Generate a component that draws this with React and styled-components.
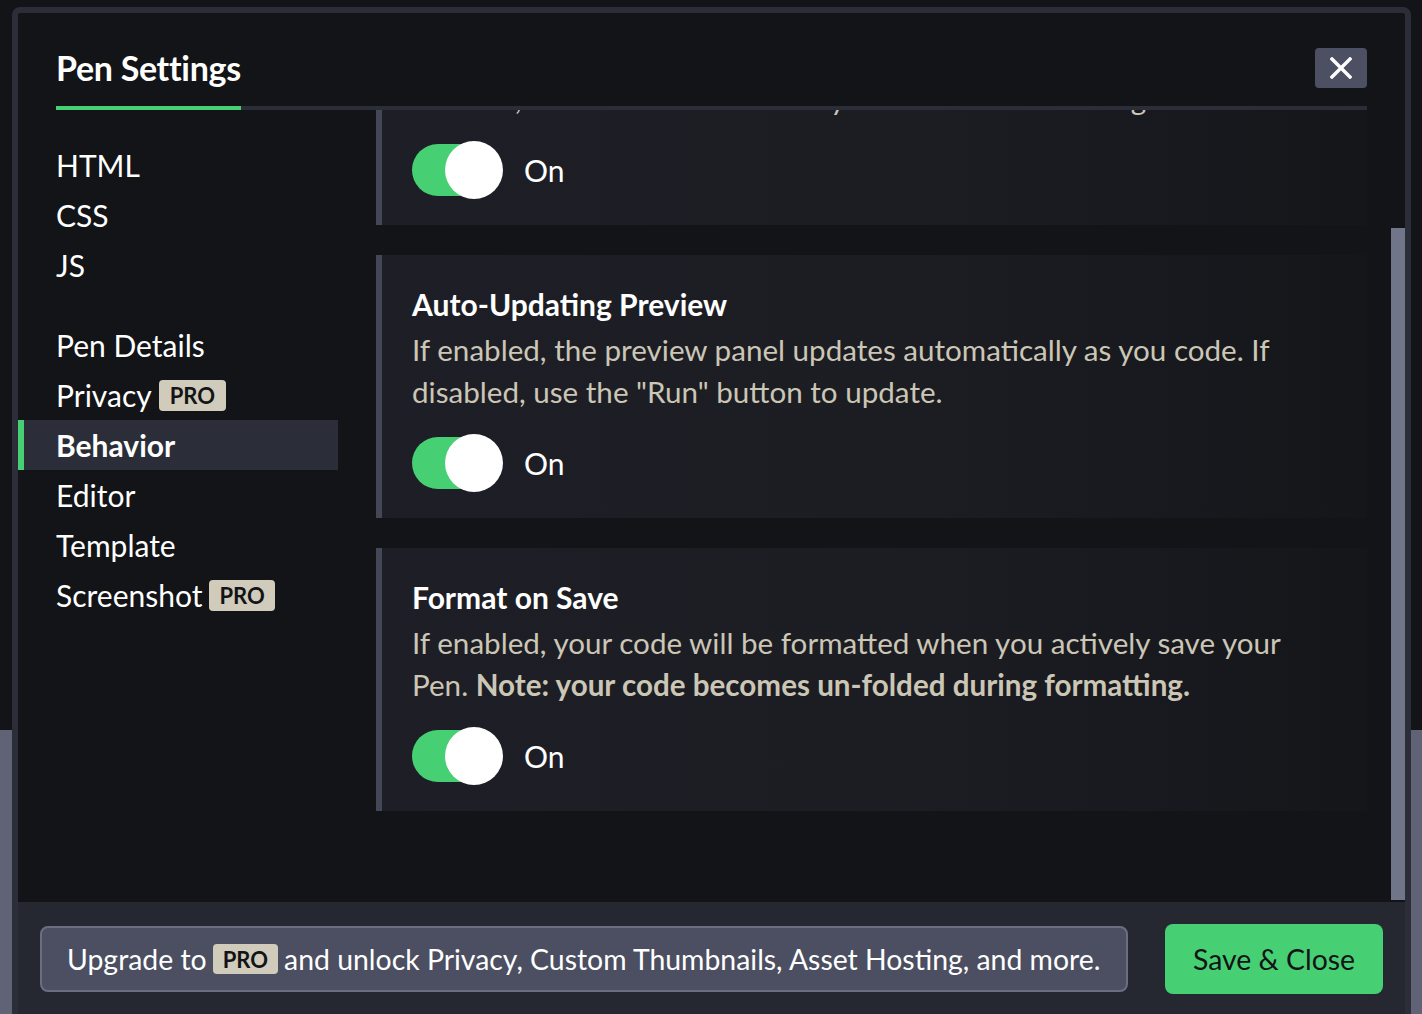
import React from "react";
import styled, { createGlobalStyle } from "styled-components";

const GlobalStyle = createGlobalStyle`
  html, body {
    margin: 0;
    height: 100%;
    overflow: hidden;
  }
  body {
    background: linear-gradient(to bottom, #131417 0, #131417 730px, #5f6375 730px, #5f6375 100%);
    font-family: Lato, "Open Sans", "Liberation Sans", sans-serif;
    color: #fff;
  }
  * { box-sizing: border-box; }
`;

const Stage = styled.div`
  height: 1014px;
  padding: 7px 11px 0 12px;
  overflow: hidden;
`;

const Modal = styled.div`
  height: 1040px;
  display: flex;
  flex-direction: column;
  background: #131417;
  border: 6px solid #2b2e38;
  border-radius: 8px;
  overflow: hidden;
`;

const Header = styled.div`
  flex: none;
  padding: 0 38px;
`;

const HeaderInner = styled.div`
  display: flex;
  justify-content: space-between;
  align-items: flex-start;
  padding-top: 35px;
  border-bottom: 4px solid #2b2e38;
`;

const Title = styled.h1`
  margin: 0 0 -4px;
  font-size: 34px;
  line-height: 40px;
  font-weight: 700;
  letter-spacing: -0.3px;
  padding-bottom: 18px;
  border-bottom: 4px solid #47cf73;
  color: #fff;
`;

const CloseButton = styled.button`
  width: 52px;
  height: 40px;
  border: none;
  border-radius: 4px;
  background: #4c5062;
  display: flex;
  align-items: center;
  justify-content: center;
  padding: 0;
  cursor: pointer;
`;

const Body = styled.div`
  flex: none;
  height: 792px;
  display: flex;
`;

const Sidebar = styled.nav`
  flex: none;
  width: 320px;
  padding-top: 30px;
  display: flex;
  flex-direction: column;
  gap: 30px;
`;

const NavGroup = styled.div`
  display: flex;
  flex-direction: column;
`;

const NavItem = styled.div`
  height: 50px;
  display: flex;
  align-items: center;
  font-size: 30px;
  color: #fff;
  font-weight: ${(p) => (p.$active ? 700 : 400)};
  padding-left: ${(p) => (p.$active ? "32px" : "38px")};
  border-left: ${(p) => (p.$active ? "6px solid #47cf73" : "none")};
  background: ${(p) => (p.$active ? "#2b2e38" : "transparent")};
`;

const Badge = styled.span`
  display: inline-flex;
  align-items: center;
  justify-content: center;
  height: ${(p) => p.$h || 31}px;
  padding: 0 ${(p) => p.$px || 11}px;
  margin: 0 ${(p) => p.$mx || 7}px;
  background: #d0cbba;
  color: #131417;
  font-size: 22px;
  font-weight: 700;
  border-radius: 4px;
`;

const Content = styled.div`
  flex: 1;
  margin-left: 38px;
  margin-right: 24px;
  overflow: hidden;
`;

const Scroller = styled.div`
  margin-top: -106px;
  display: flex;
  flex-direction: column;
  gap: 30px;
`;

const Panel = styled.section`
  border-left: 6px solid #434756;
  background: linear-gradient(to right, #1e1f26 0%, #1c1d23 55%, #15161a 100%);
  padding: 30px 30px 26px;
`;

const PanelTitle = styled.h3`
  margin: 0;
  font-size: 30px;
  line-height: 38px;
  font-weight: 700;
  color: #fff;
`;

const PanelText = styled.p`
  margin: 6px 0 0;
  max-width: 920px;
  font-size: 29.6px;
  line-height: 42px;
  color: #cbc6b5;
  strong {
    font-weight: 700;
  }
`;

const SwitchRow = styled.div`
  margin-top: 21px;
  display: flex;
  align-items: center;
  gap: 21px;
  font-size: 30px;
  color: #fff;
`;

const Switch = styled.div`
  position: relative;
  width: 91px;
  height: 58px;
  &::before {
    content: "";
    position: absolute;
    left: 0;
    top: 3px;
    width: 84px;
    height: 52px;
    border-radius: 26px;
    background: #47cf73;
  }
  &::after {
    content: "";
    position: absolute;
    right: 0;
    top: 0;
    width: 58px;
    height: 58px;
    border-radius: 50%;
    background: #fff;
  }
`;

const ScrollTrack = styled.div`
  flex: none;
  width: 14px;
`;

const ScrollThumb = styled.div`
  margin-top: 118px;
  height: 672px;
  background: #70758a;
`;

const Footer = styled.div`
  flex: 1;
  background: #252831;
  padding: 22px;
  display: flex;
  justify-content: space-between;
  align-items: flex-start;
`;

const Upgrade = styled.div`
  margin-top: 2px;
  height: 66px;
  display: flex;
  align-items: center;
  padding: 0 26px 0 25px;
  background: #4b4f61;
  border: 2px solid #6a6e80;
  border-radius: 8px;
  font-size: 28.4px;
  color: #fff;
  white-space: nowrap;
`;

const SaveButton = styled.button`
  flex: none;
  height: 70px;
  width: 218px;
  padding: 0;
  border: none;
  border-radius: 8px;
  background: #47cf73;
  color: #131417;
  font-family: Lato, "Open Sans", sans-serif;
  font-size: 28.4px;
  white-space: nowrap;
  cursor: pointer;
`;

const XIcon = () => (
  <svg width="22" height="22" viewBox="0 0 22 22" aria-hidden="true">
    <path d="M2 2 L20 20 M20 2 L2 20" stroke="#fff" strokeWidth="3.4" strokeLinecap="square" fill="none" />
  </svg>
);

const Toggle = () => (
  <SwitchRow>
    <Switch />
    <span>On</span>
  </SwitchRow>
);

export default function App() {
  return (
    <>
      <GlobalStyle />
      <Stage>
        <Modal>
          <Header>
            <HeaderInner>
              <Title>Pen Settings</Title>
              <CloseButton aria-label="Close">
                <XIcon />
              </CloseButton>
            </HeaderInner>
          </Header>
          <Body>
            <Sidebar>
              <NavGroup>
                <NavItem>HTML</NavItem>
                <NavItem>CSS</NavItem>
                <NavItem>JS</NavItem>
              </NavGroup>
              <NavGroup>
                <NavItem>Pen Details</NavItem>
                <NavItem>
                  Privacy<Badge>PRO</Badge>
                </NavItem>
                <NavItem $active>Behavior</NavItem>
                <NavItem>Editor</NavItem>
                <NavItem>Template</NavItem>
                <NavItem>
                  Screenshot<Badge $px={10}>PRO</Badge>
                </NavItem>
              </NavGroup>
            </Sidebar>
            <Content>
              <Scroller>
                <Panel>
                  <PanelTitle>Auto Save</PanelTitle>
                  <PanelText>If active, Pens will autosave every 30 seconds after being saved once.</PanelText>
                  <Toggle />
                </Panel>
                <Panel>
                  <PanelTitle>Auto-Updating Preview</PanelTitle>
                  <PanelText>
                    If enabled, the preview panel updates automatically as you code. If disabled, use the "Run" button to update.
                  </PanelText>
                  <Toggle />
                </Panel>
                <Panel>
                  <PanelTitle>Format on Save</PanelTitle>
                  <PanelText>
                    If enabled, your code will be formatted when you actively save your Pen.{" "}
                    <strong>Note: your code becomes un-folded during formatting.</strong>
                  </PanelText>
                  <Toggle />
                </Panel>
              </Scroller>
            </Content>
            <ScrollTrack>
              <ScrollThumb />
            </ScrollTrack>
          </Body>
          <Footer>
            <Upgrade>
              Upgrade to<Badge $h={30} $mx={6} $px={10}>PRO</Badge>and unlock Privacy, Custom Thumbnails, Asset Hosting, and more.
            </Upgrade>
            <SaveButton>Save &amp; Close</SaveButton>
          </Footer>
        </Modal>
      </Stage>
    </>
  );
}
